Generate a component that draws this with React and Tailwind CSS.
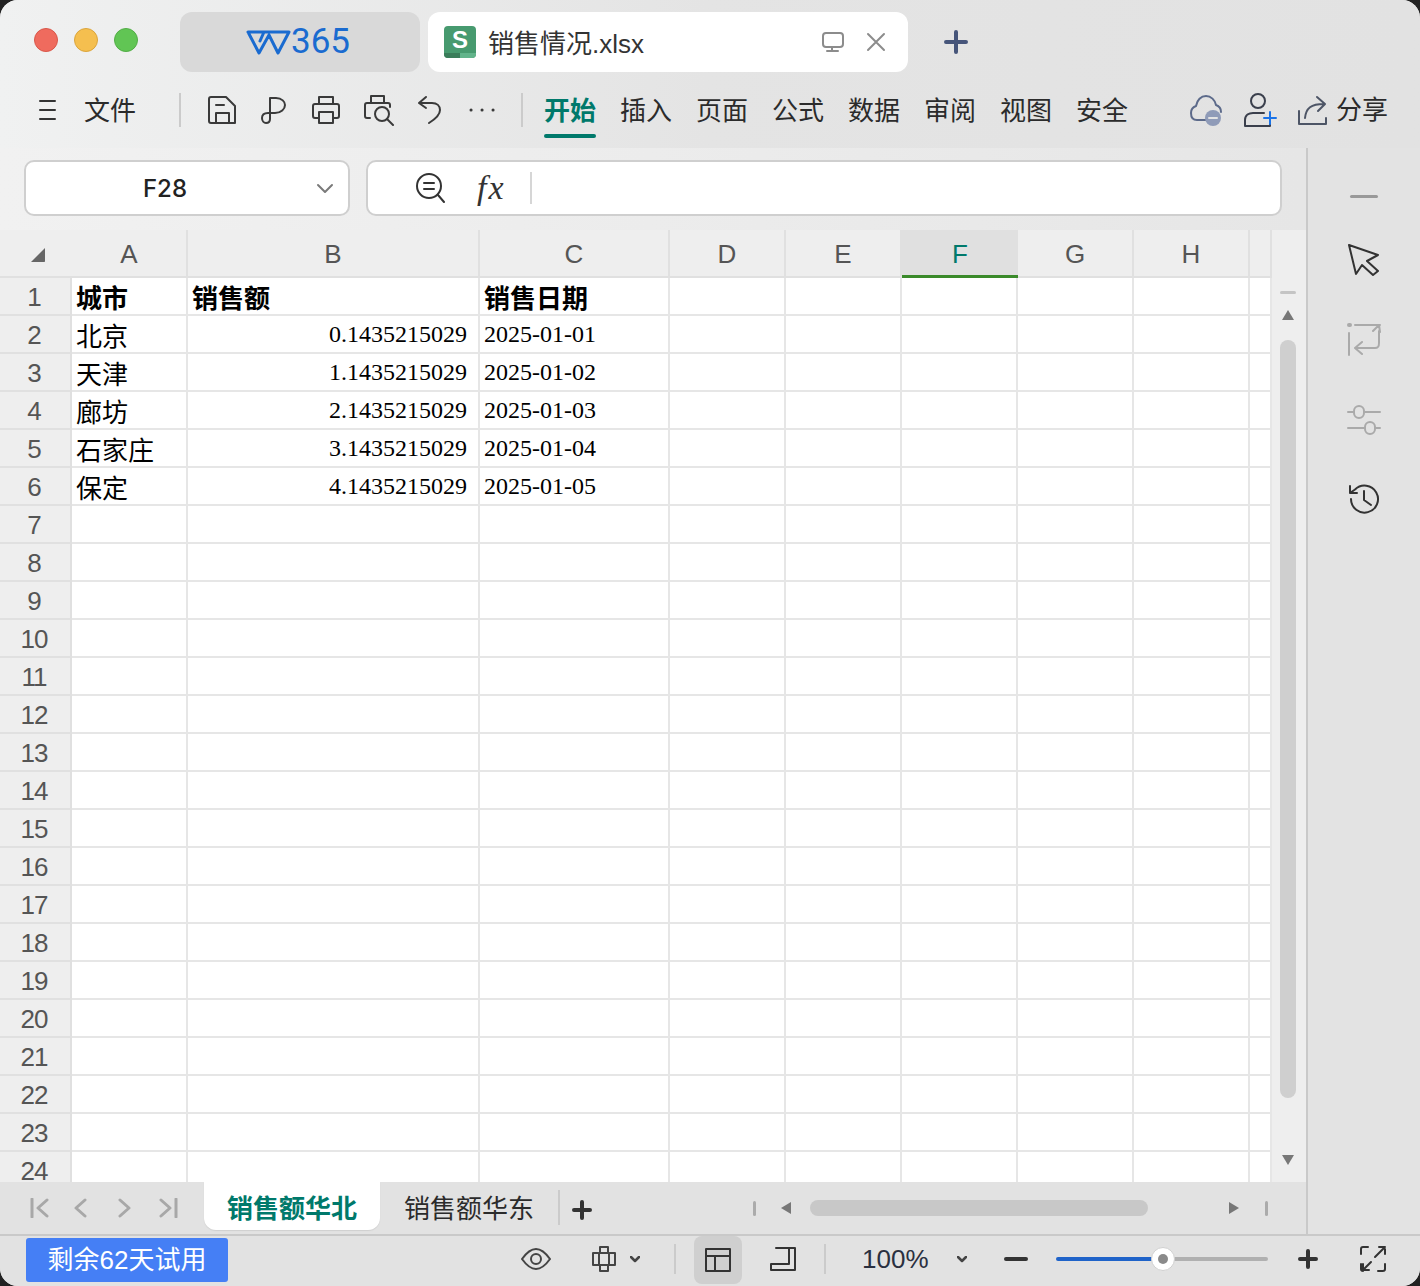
const cols = [
  { name: 'A', w: 'w-[116px]' },
  { name: 'B', w: 'w-[292px]' },
  { name: 'C', w: 'w-[190px]' },
  { name: 'D', w: 'w-[116px]' },
  { name: 'E', w: 'w-[116px]' },
  { name: 'F', w: 'w-[116px]' },
  { name: 'G', w: 'w-[116px]' },
  { name: 'H', w: 'w-[116px]' },
  { name: '', w: 'w-[22px]' },
]

const data = {
  1: ['城市', '销售额', '销售日期'],
  2: ['北京', '0.1435215029', '2025-01-01'],
  3: ['天津', '1.1435215029', '2025-01-02'],
  4: ['廊坊', '2.1435215029', '2025-01-03'],
  5: ['石家庄', '3.1435215029', '2025-01-04'],
  6: ['保定', '4.1435215029', '2025-01-05'],
}

const rows = Array.from({ length: 24 }, (_, i) => i + 1)
const menus = ['插入', '页面', '公式', '数据', '审阅', '视图', '安全']
const sans = 'font-["Liberation_Sans","Noto_Sans_CJK_SC",sans-serif]'

function Icon({ w, h, children, className = '', sw = 2, stroke = 'currentColor' }) {
  return (
    <svg width={w} height={h} viewBox={`0 0 ${w} ${h}`} fill="none" stroke={stroke} strokeWidth={sw}
      strokeLinecap="round" strokeLinejoin="round" className={`shrink-0 ${className}`}>
      {children}
    </svg>
  )
}

function Titlebar() {
  return (
    <div className="flex h-[72px] items-end pl-[34px]">
      <div className="flex h-[60px] items-center pb-1">
        <span className="h-6 w-6 rounded-full border border-[#d9574a] bg-[#ef6b5e]" />
        <span className="ml-4 h-6 w-6 rounded-full border border-[#dba53c] bg-[#f5bf4f]" />
        <span className="ml-4 h-6 w-6 rounded-full border border-[#52ad46] bg-[#61c554]" />
      </div>
      <div className="ml-[42px] flex h-[60px] w-[240px] items-center justify-center rounded-xl bg-[#d9d9d9] pr-1 text-[#1a6bd0]">
        <Icon w={45} h={26} sw={3}>
          <path d="M2 3H27M2 3L13 24L23 6M23 6L32 24L43 3H27M14 12L18 3" />
        </Icon>
        <span className="-mt-px font-['Roboto',sans-serif] text-[35px] leading-none">365</span>
      </div>
      <div className="ml-2 flex h-[60px] w-[480px] items-center rounded-xl bg-white pl-4">
        <div className="relative flex h-8 w-8 items-center justify-center overflow-hidden rounded bg-[#479a6f] pb-1 font-['Liberation_Sans',sans-serif] text-[24px] leading-none font-bold text-white">
          S
          <span className="absolute bottom-0 left-0 h-[5px] w-4 bg-[#3a7d5a]" />
          <span className="absolute right-0 bottom-0 h-[5px] w-4 bg-[#62b48b]" />
        </div>
        <span className={`mt-[3px] ml-[12px] text-[26px] leading-none text-[#333] ${sans}`}>销售情况.xlsx</span>
        <Icon w={24} h={22} className="ml-[177px] text-[#8c8c8c]">
          <rect x="2" y="2" width="20" height="14" rx="3" />
          <path d="M11 16V20M6 20H17" />
        </Icon>
        <Icon w={20} h={20} className="ml-[21px] text-[#8c8c8c]">
          <path d="M2 2L18 18M18 2L2 18" />
        </Icon>
      </div>
      <div className="mb-[18px] ml-9">
        <Icon w={24} h={24} sw={4} className="text-[#46557a]">
          <path d="M12 2V22M2 12H22" />
        </Icon>
      </div>
    </div>
  )
}

function Toolbar() {
  return (
    <div className={`flex h-[76px] items-center pl-[38px] text-[26px] text-[#2b2b2b] ${sans}`}>
      <Icon w={20} h={24} className="text-[#333]">
        <path d="M2 3H17M2 12H17M2 21H17" />
      </Icon>
      <span className="mt-0.5 ml-[26px] leading-none">文件</span>
      <span className="ml-[43px] h-[34px] w-0.5 bg-[#cbcbcb]" />
      <Icon w={30} h={30} className="ml-[26px] text-[#3a3a3a]">
        <path d="M4 2H19L28 11V28H4C3 28 2 27 2 26V4C2 3 3 2 4 2ZM9 10H17M9 28V18H22V28" />
      </Icon>
      <Icon w={28} h={30} className="ml-[22px] text-[#3a3a3a]">
        <path d="M11 18V3H17C23 3 26 7 26 10C26 14 22 18 16 18H9C5 18 3 20 3 23C3 26 5 28 7 28C10 28 11 26 11 24V18" />
      </Icon>
      <Icon w={30} h={30} className="ml-[24px] text-[#3a3a3a]">
        <path d="M8 9V2H22V9M8 23H4C3 23 2 22 2 21V11C2 10 3 9 4 9H26C27 9 28 10 28 11V21C28 22 27 23 26 23H22M8 17H22V28H8Z" />
      </Icon>
      <Icon w={32} h={32} className="ml-[22px] text-[#3a3a3a]">
        <path d="M8 9V2H21V9M7 24H4C3 24 2 23 2 22V11C2 10 3 9 4 9H25C26 9 27 10 27 11V13" />
        <circle cx="19" cy="20" r="7" />
        <path d="M24 25L30 31" />
      </Icon>
      <Icon w={26} h={30} className="ml-[22px] text-[#3a3a3a]">
        <path d="M9 2L2 8L9 13M2 8H15C20 8 23 11 23 15C23 18 20 23 12 28" />
      </Icon>
      <Icon w={28} h={6} sw={3} className="ml-[25px] text-[#3a3a3a]">
        <path d="M3 3H3.1M14 3H14.1M25 3H25.1" />
      </Icon>
      <span className="ml-[25px] h-[34px] w-0.5 bg-[#cbcbcb]" />
      <div className="relative ml-[21px] flex h-[52px] w-[52px] items-center justify-center pt-0.5 font-bold text-[#00796b]">
        开始
        <span className="absolute right-0 -bottom-0.5 left-0 h-1 rounded-sm bg-[#00796b]" />
      </div>
      {menus.map((m) => (
        <span key={m} className="mt-0.5 ml-6 w-[52px] leading-none">{m}</span>
      ))}
      <Icon w={34} h={34} className="ml-[61px] text-[#5c6a8a]">
        <path d="M21 27H8C4 27 2 24 2 20C2 17 4 14 7 13C8 7 12 3 17 3C22 3 26 7 27 12C30 13 32 16 32 19" />
        <circle cx="24" cy="25" r="8" fill="#8f9bb8" stroke="none" />
        <path d="M20 25H28" stroke="#e3e3e3" />
      </Icon>
      <Icon w={34} h={36} className="ml-[20px] text-[#3a3f4c]">
        <circle cx="15" cy="9" r="7" />
        <path d="M2 34V28C2 23 6 21 10 21H21M2 34H27V32" />
        <path d="M27 20V32M21 26H33" stroke="#1a73e8" />
      </Icon>
      <Icon w={32} h={32} className="ml-[20px] text-[#4d5566]">
        <path d="M2 17V30H29V24M8 24C9 14 14 10 27 10M20 3L28 10L21 17" />
      </Icon>
      <span className="ml-[7px] leading-none">分享</span>
    </div>
  )
}

function FormulaBar() {
  return (
    <div className="flex h-[82px] items-start pt-3 pl-[24px]">
      <div className="relative flex h-14 w-[326px] items-center justify-center rounded-[10px] border-2 border-[#cfcfcf] bg-white font-['Inter',sans-serif] text-[24px] font-medium text-[#222]">
        <span className="-ml-[44px] pt-0.5">F28</span>
        <Icon w={18} h={11} className="absolute right-[14px] text-[#7a7a7a]">
          <path d="M2 2L9 9L16 2" />
        </Icon>
      </div>
      <div className="ml-[16px] flex h-14 w-[916px] items-center rounded-[10px] border-2 border-[#cfcfcf] bg-white pl-[47px]">
        <Icon w={30} h={32} className="text-[#333]">
          <circle cx="14" cy="14" r="12" />
          <path d="M9 11H19M9 17H19M23 23L29 30" />
        </Icon>
        <span className="ml-[32px] w-[28px] font-['Liberation_Serif',serif] text-[34px] leading-none tracking-[2px] text-[#333] italic">fx</span>
        <span className="ml-[25px] h-[32px] w-0.5 bg-[#d6d6d6]" />
      </div>
    </div>
  )
}

function Cell({ row, col, value }) {
  let cls = 'pt-1.5 text-[26px] font-["Liberation_Serif","Noto_Sans_CJK_SC",serif]'
  if (row === 1) cls = 'pt-1.5 text-[26px] font-bold font-["Liberation_Serif","Noto_Sans_CJK_SC",serif]'
  else if (col === 1) cls = 'justify-end pr-[11px] text-[24px] font-["Liberation_Serif",serif]'
  else if (col === 2) cls = 'text-[24px] font-["Liberation_Serif",serif]'
  return (
    <div className={`flex items-center overflow-hidden border-r-2 border-b-2 border-[#e6e6e6] pl-1 whitespace-nowrap text-black ${cols[col].w} ${cls}`}>
      {value}
    </div>
  )
}

function Sheet() {
  return (
    <div className="flex h-[952px] overflow-hidden">
      <div className="w-[1272px] bg-white">
        <div className={`flex h-[48px] bg-[#eeeeee] text-[26px] leading-none text-[#555] ${sans}`}>
          <div className="flex w-[72px] items-end justify-start border-b-2 border-[#e0e0e0] pb-[14px] pl-[31px]">
            <svg width="14" height="14" viewBox="0 0 14 14" fill="#666"><path d="M14 0V13C14 13.6 13.6 14 13 14H0Z" /></svg>
          </div>
          {cols.map((c) => (
            <div
              key={c.w + c.name}
              className={`flex items-center justify-center pt-0.5 ${c.w} ${
                c.name === 'F'
                  ? 'border-b-[3px] border-[#3a8a2a] bg-[#e0e0e0] text-[#00796b]'
                  : 'border-r-2 border-b-2 border-[#e0e0e0]'
              }`}
            >
              {c.name}
            </div>
          ))}
        </div>
        {rows.map((r) => (
          <div key={r} className="flex h-[38px]">
            <div className={`flex w-[72px] items-center justify-center border-r-2 border-b-2 border-[#e0e0e0] bg-[#eeeeee] pt-[3px] pr-[2px] text-[26px] tracking-[-1px] text-[#555] ${sans}`}>
              {r}
            </div>
            {cols.map((c, i) => (
              <Cell key={c.w + c.name} row={r} col={i} value={data[r] ? data[r][i] : null} />
            ))}
          </div>
        ))}
      </div>
      <div className="flex w-[34px] flex-col items-center bg-[#eeeeee] pt-[61px] pr-[2px]">
        <span className="h-[3px] w-4 rounded bg-[#c4c4c4]" />
        <svg width="12" height="10" viewBox="0 0 12 10" fill="#777" className="mt-4"><path d="M6 0L12 10H0Z" /></svg>
        <div className="mt-[20px] h-[758px] w-4 rounded-lg bg-[#cfcfcf]" />
        <svg width="12" height="10" viewBox="0 0 12 10" fill="#777" className="mt-[57px]"><path d="M0 0H12L6 10Z" /></svg>
      </div>
    </div>
  )
}

function Tabbar() {
  return (
    <div className={`flex h-[52px] items-start bg-[#e2e2e2] text-[26px] ${sans}`}>
      <div className="flex h-[52px] items-center pl-[30px] text-[#a8a8a8]">
        <Icon w={20} h={20} sw={3}>
          <path d="M2 1V19M17 2L8 10L17 18" />
        </Icon>
        <Icon w={14} h={20} sw={3} className="ml-[23px]">
          <path d="M12 2L3 10L12 18" />
        </Icon>
        <Icon w={14} h={20} sw={3} className="ml-[31px]">
          <path d="M2 2L11 10L2 18" />
        </Icon>
        <Icon w={20} h={20} sw={3} className="ml-[26px]">
          <path d="M3 2L12 10L3 18M18 1V19" />
        </Icon>
      </div>
      <div className="ml-[26px] flex h-12 w-[176px] items-center justify-center rounded-b-xl bg-white pt-1.5 font-bold text-[#00796b] shadow-[0_1px_1px_#d0d0d0]">
        销售额华北
      </div>
      <div className="flex h-12 w-[178px] items-center justify-center pt-1.5 text-[#2b2b2b]">销售额华东</div>
      <span className="mt-2 h-[35px] w-0.5 bg-[#cbcbcb]" />
      <Icon w={20} h={20} sw={4} className="mt-[18px] ml-3 text-[#333]">
        <path d="M10 2V18M2 10H18" />
      </Icon>
      <div className="ml-[161px] flex h-[52px] items-center">
        <span className="h-[15px] w-[3px] rounded bg-[#ababab]" />
        <svg width="10" height="12" viewBox="0 0 10 12" fill="#777" className="ml-[25px]"><path d="M10 0V12L0 6Z" /></svg>
        <div className="ml-[19px] h-4 w-[338px] rounded-lg bg-[#c8c8c8]" />
        <svg width="10" height="12" viewBox="0 0 10 12" fill="#777" className="ml-[81px]"><path d="M0 0V12L10 6Z" /></svg>
        <span className="ml-[26px] h-[15px] w-[3px] rounded bg-[#ababab]" />
      </div>
    </div>
  )
}

function SidePanel() {
  return (
    <div className="flex w-[112px] flex-col items-center bg-[#e3e3e3] pr-[1px]">
      <span className="mt-[47px] h-[3px] w-7 rounded bg-[#999]" />
      <Icon w={34} h={34} className="mt-[45px] text-[#333]">
        <path d="M2 2L31 12L20 18L31 28L26 32L15 22L9 31Z" />
      </Icon>
      <Icon w={34} h={34} className="mt-[46px] text-[#aaa]">
        <path d="M2 10V32M8 2H33M32 8V20C32 24 31 25 28 25H9M15 19L8 25L15 31M26 8L32 2L33 9" />
        <path d="M2 2H3" strokeWidth="4" />
      </Icon>
      <Icon w={34} h={30} className="mt-[48px] text-[#aaa]">
        <path d="M1 7H7M17 7H33M1 23H18M28 23H33" />
        <rect x="7" y="1" width="10" height="12" rx="5" />
        <rect x="18" y="17" width="10" height="12" rx="5" />
      </Icon>
      <Icon w={32} h={32} className="mt-[48px] text-[#333]">
        <path d="M3 16A13.5 13.5 0 1 0 7 6.5L2 10M2 3V10H9M16 8V17L23 22" />
      </Icon>
    </div>
  )
}

function Statusbar() {
  return (
    <div className={`flex h-[52px] items-center border-t-2 border-[#c9c9c9] bg-[#e2e2e2] pb-1 text-[26px] ${sans}`}>
      <div className="mt-0.5 ml-[26px] flex h-[44px] w-[202px] items-center justify-center rounded-[3px] bg-[#457ff5] text-white">
        剩余62天试用
      </div>
      <Icon w={30} h={22} className="ml-[293px] text-[#444]">
        <path d="M1 11C6 4 10 1 15 1C20 1 24 4 29 11C24 18 20 21 15 21C10 21 6 18 1 11Z" />
        <circle cx="15" cy="11" r="5" />
      </Icon>
      <Icon w={26} h={28} className="ml-[40px] text-[#444]">
        <path d="M9 7V2H17V7M9 21V26H17V21M7 8H2V20H7M19 8H24V20H19M8 8H18V20H8Z" />
      </Icon>
      <Icon w={10} h={7} sw={2.5} className="ml-[13px] text-[#444]">
        <path d="M1 1L5 5L9 1" />
      </Icon>
      <span className="ml-[34px] h-[30px] w-0.5 bg-[#cbcbcb]" />
      <div className="mt-0.5 ml-[18px] flex h-12 w-12 items-center justify-center rounded-lg bg-[#cfcfcf]">
        <Icon w={26} h={24} className="text-[#333]">
          <path d="M1 1H25V23H1ZM1 8H25M10 8V23" />
        </Icon>
      </div>
      <Icon w={26} h={24} className="ml-[28px] text-[#333]">
        <path d="M6 1H25V23H1M1 23V17H19V1" />
      </Icon>
      <span className="ml-[28px] h-[30px] w-0.5 bg-[#cbcbcb]" />
      <span className="ml-[36px] leading-none text-[#2a3040]">100%</span>
      <Icon w={10} h={7} sw={2.5} className="ml-[28px] text-[#444]">
        <path d="M1 1L5 5L9 1" />
      </Icon>
      <span className="ml-[37px] h-1 w-6 rounded bg-[#333]" />
      <div className="relative ml-[28px] flex h-1 w-[212px]">
        <span className="w-[100px] rounded-l bg-[#1f63c9]" />
        <span className="flex-1 rounded-r bg-[#b0b0b0]" />
        <span className="absolute top-[-10px] left-[95px] flex h-6 w-6 items-center justify-center rounded-full border border-[#d0d0d0] bg-white">
          <span className="h-2.5 w-2.5 rounded-full bg-[#8a8a8a]" />
        </span>
      </div>
      <Icon w={20} h={20} sw={4} className="ml-[30px] text-[#333]">
        <path d="M10 2V18M2 10H18" />
      </Icon>
      <Icon w={26} h={26} className="ml-[42px] text-[#333]">
        <path d="M1 8V3C1 2 2 1 3 1H8M25 18V23C25 24 24 25 23 25H18M1 18V23C1 24 2 25 3 25H3M25 8V3M15 11L24 2M19 1H25M3 24L11 16M3 18V24H9" />
      </Icon>
    </div>
  )
}

export default function App() {
  return (
    <div className="h-[1286px] w-[1420px] overflow-hidden bg-[#222]">
      <div className="flex h-full flex-col overflow-hidden rounded-[18px] bg-[#e3e3e3]">
        <div className="bg-gradient-to-r from-[#f0f1f1] via-[#e4e4e4] to-[#e2e2e2]">
          <Titlebar />
          <Toolbar />
        </div>
        <div className="flex h-[1086px]">
          <div className="w-[1306px] bg-gradient-to-r from-[#f1f1f1] via-[#ececec] to-[#e6e6e6]">
            <FormulaBar />
            <Sheet />
            <Tabbar />
          </div>
          <div className="w-0.5 bg-[#c9c9c9]" />
          <SidePanel />
        </div>
        <Statusbar />
      </div>
    </div>
  )
}
